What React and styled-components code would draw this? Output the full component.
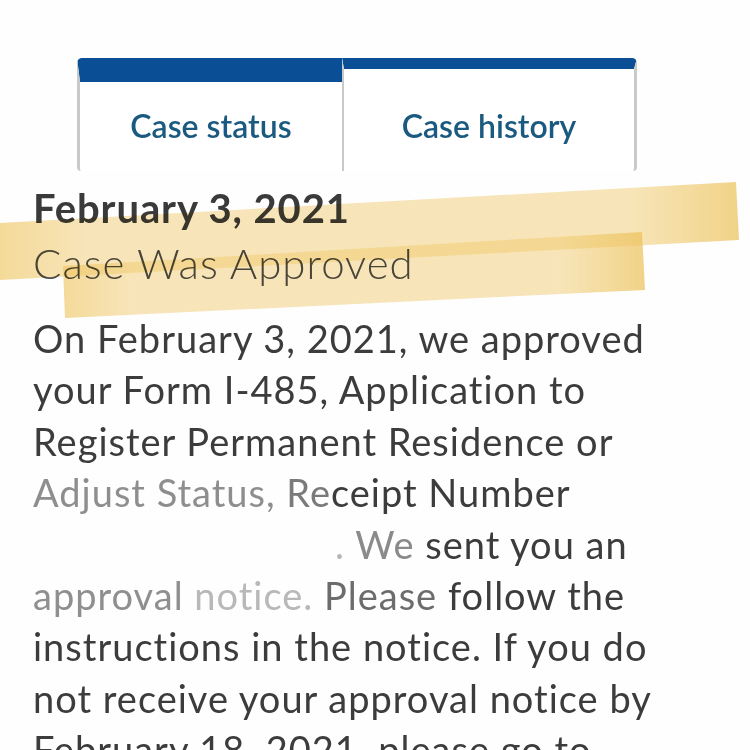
import React from "react";
import styled, { createGlobalStyle } from "styled-components";

const Global = createGlobalStyle`
  html, body {
    margin: 0;
    padding: 0;
    background: #ffffff;
  }
  body {
    font-family: "Lato", "Liberation Sans", sans-serif;
  }
`;

const Page = styled.div`
  position: relative;
  width: 750px;
  height: 750px;
  overflow: hidden;
  background: #fefefe;
`;

const TabBar = styled.div`
  display: flex;
  margin: 58px 0 0 77px;
  width: 560px;
`;

const Tab = styled.div`
  box-sizing: border-box;
  width: ${(p) => p.$width}px;
  height: 113px;
  padding-top: ${(p) => 48 - p.$bar}px;
  border-top: ${(p) => p.$bar}px solid #0a4f96;
  border-left: ${(p) => (p.$first ? 3 : 2)}px solid #c9c9c9;
  border-right: ${(p) => (p.$last ? 3 : 0)}px solid #c9c9c9;
  border-radius: ${(p) => (p.$first ? "5px 0 0 4px" : "0 5px 4px 0")};
  text-align: center;
  font-size: 32px;
  line-height: 40px;
  font-weight: 600;
  color: #1b5a80;
  background: #ffffff;
`;

const Content = styled.div`
  padding: 15px 0 0 33px;
  color: #3c3c3c;
`;

const DateTitle = styled.div`
  font-size: 40px;
  line-height: 44px;
  font-weight: 700;
  letter-spacing: 0.9px;
  color: #3a3a3b;
`;

const StatusTitle = styled.div`
  margin-top: 7px;
  font-size: 42px;
  line-height: 52px;
  font-weight: 300;
  letter-spacing: 1px;
  color: #4c4c4c;
`;

const Body = styled.div`
  margin-top: 24px;
  font-size: 38px;
  line-height: 51.4px;
  font-weight: 400;
  letter-spacing: 1px;
`;

const Line = styled.div`
  white-space: nowrap;
`;

const Faded = styled.span`
  color: ${(p) => p.$tone};
`;

const Redacted = styled.span`
  display: inline-block;
  width: 302px;
`;

const Marker = styled.svg`
  position: absolute;
  left: 0;
  top: 0;
  pointer-events: none;
  mix-blend-mode: multiply;
`;

export default function App() {
  return (
    <Page>
      <Global />
      <TabBar>
        <Tab $width={265} $bar={24} $first>
          Case status
        </Tab>
        <Tab $width={295} $bar={11} $last>
          Case history
        </Tab>
      </TabBar>

      <Content>
        <DateTitle>February 3, 2021</DateTitle>
        <StatusTitle>Case Was Approved</StatusTitle>
        <Body>
          <Line>On February 3, 2021, we approved</Line>
          <Line>your Form I-485, Application to</Line>
          <Line>Register Permanent Residence or</Line>
          <Line>
            <Faded $tone="#8e8e8e">Adjust Status, </Faded>
            <Faded $tone="#7a7a7a">Re</Faded>ceipt Number
          </Line>
          <Line>
            <Redacted />
            <Faded $tone="#b5b5b5">. </Faded>
            <Faded $tone="#8a8a8a">We</Faded> sent you an
          </Line>
          <Line>
            <Faded $tone="#8f8f8f">approval </Faded>
            <Faded $tone="#b8b8b8">notice. </Faded>
            <Faded $tone="#6c6c6c">Please</Faded> follow the
          </Line>
          <Line>instructions in the notice. If you do</Line>
          <Line>not receive your approval notice by</Line>
          <Line>February 18, 2021, please go to</Line>
        </Body>
      </Content>

      <Marker width="750" height="750" viewBox="0 0 750 750">
        <defs>
          <linearGradient id="hl" x1="0" x2="1" y1="0" y2="0">
            <stop offset="0" stopColor="#efc45c" stopOpacity="0.62" />
            <stop offset="0.12" stopColor="#f0c866" stopOpacity="0.45" />
            <stop offset="0.85" stopColor="#f0c866" stopOpacity="0.45" />
            <stop offset="1" stopColor="#ecc055" stopOpacity="0.7" />
          </linearGradient>
        </defs>
        <polygon points="0,223 736,182 739,240 0,280" fill="url(#hl)" />
        <polygon points="63,266 642,232 645,290 65,318" fill="url(#hl)" />
      </Marker>
    </Page>
  );
}
